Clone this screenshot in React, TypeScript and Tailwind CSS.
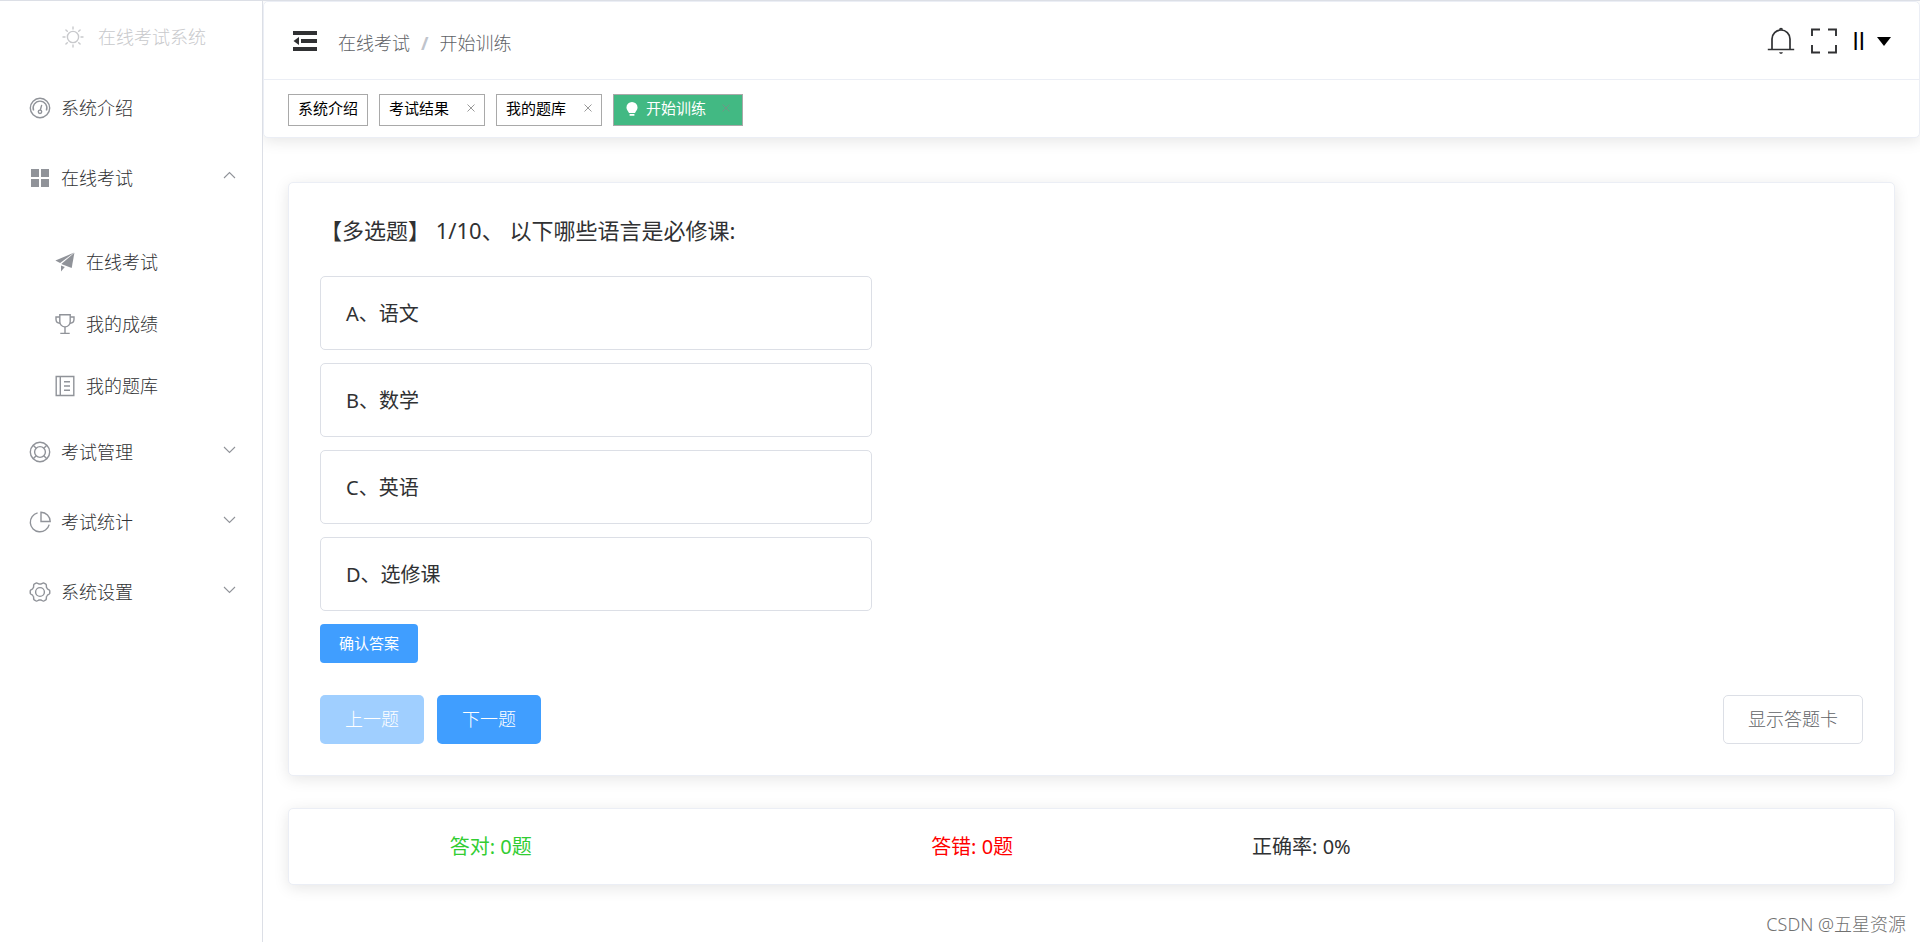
import { useState } from "react";
import type { ReactNode } from "react";

type IconProps = { children: ReactNode; className?: string; box?: number };

function Icon({ children, className = "size-[22px]", box = 22 }: IconProps) {
  return (
    <svg
      viewBox={`0 0 ${box} ${box}`}
      className={`${className} shrink-0`}
      fill="none"
      stroke="currentColor"
      strokeWidth="1.4"
      aria-hidden="true"
    >
      {children}
    </svg>
  );
}

const SunIcon = () => (
  <Icon>
    <circle cx="11" cy="11" r="5.6" />
    <path
      strokeLinecap="round"
      d="M11 1v2M11 19v2M1 11h2M19 11h2M3.9 3.9l1.4 1.4M16.7 16.7l1.4 1.4M3.9 18.1l1.4-1.4M16.7 5.3l1.4-1.4"
    />
  </Icon>
);

const OdometerIcon = () => (
  <Icon>
    <circle cx="11" cy="11" r="9.7" />
    <path d="M4.6 13.6A6.9 6.9 0 1 1 17.4 13.6" />
    <circle cx="11" cy="14.8" r="1.7" />
    <path strokeLinecap="round" d="M11.4 12.8l1.2-4.4" />
  </Icon>
);

const GridIcon = () => (
  <Icon>
    <g fill="currentColor" stroke="none">
      <rect x="2" y="2" width="8" height="8" />
      <rect x="12" y="2" width="8" height="8" />
      <rect x="2" y="12" width="8" height="8" />
      <rect x="12" y="12" width="8" height="8" />
    </g>
  </Icon>
);

const PlaneIcon = () => (
  <Icon>
    <g fill="currentColor" stroke="none">
      <path d="M20.2 1.6L1.4 9.6l4.7 2.5z" />
      <path d="M20.4 1.8L7.3 12.9l10.4 4.2z" />
      <path d="M7 14.4v6l3.8-4.4z" />
    </g>
  </Icon>
);

const TrophyIcon = () => (
  <Icon>
    <path d="M5.8 1.7h10.4v7a5.2 5.2 0 0 1-10.4 0z" />
    <path d="M5.8 4H2v2.2c0 2.3 1.5 3.9 4 4M16.2 4H20v2.2c0 2.3-1.5 3.9-4 4M11 14v6.2M6.3 20.4h9.4" />
  </Icon>
);

const NotebookIcon = () => (
  <Icon>
    <path d="M2.2 1.5h17.6v19H2.2zM6.3 1.5v19M10 6.8h6M10 11h6M10 15.2h6" />
  </Icon>
);

const HelpIcon = () => (
  <Icon>
    <circle cx="11" cy="11" r="9.7" />
    <circle cx="11" cy="11" r="5.4" />
    <path d="M4.2 4.2l3 3M17.8 4.2l-3 3M4.2 17.8l3-3M17.8 17.8l-3-3" />
  </Icon>
);

const PieIcon = () => (
  <Icon>
    <path d="M8.6 1.9A9.6 9.6 0 1 0 20.2 13.6M12 1.2v9.3h9.2A9.4 9.4 0 0 0 12 1.2z" />
  </Icon>
);

/* Outline of a six-toothed gear centred on 11,11. */
const gearPoints = Array.from({ length: 120 }, (_, i) => {
  const angle = (i * Math.PI) / 60;
  const radius = 9 + Math.max(-1, Math.min(0.8, 1.3 * Math.cos(6 * angle)));
  return `${(11 + radius * Math.cos(angle)).toFixed(2)},${(11 + radius * Math.sin(angle)).toFixed(2)}`;
}).join(" ");

const GearIcon = () => (
  <Icon>
    <polygon points={gearPoints} strokeLinejoin="round" />
    <circle cx="11" cy="11" r="4.4" />
  </Icon>
);

const Chevron = ({ up }: { up?: boolean }) => (
  <Icon className="mb-1.5 ml-auto size-[15px]" box={15}>
    <path strokeWidth="1.1" d={up ? "M2 10l5.5-5.5L13 10" : "M2 5l5.5 5.5L13 5"} />
  </Icon>
);

const FoldIcon = () => (
  <Icon className="size-[26px]" box={26}>
    <g fill="currentColor" stroke="none">
      <rect x="1" y="3" width="24" height="4" />
      <rect x="9" y="11" width="16" height="4" />
      <rect x="1" y="19" width="24" height="4" />
      <path d="M1.5 13L7 9v8z" />
    </g>
  </Icon>
);

const BellIcon = () => (
  <Icon className="size-7" box={28}>
    <path strokeWidth="1.7" d="M5 22.5V12a9 9 0 0 1 18 0v10.5M.8 22.5h26.4" />
    <path fill="currentColor" stroke="none" d="M12 2.8a2 2 0 0 1 4 0zM12 25.2h4l-1 1.5h-2z" />
  </Icon>
);

const FullScreenIcon = () => (
  <Icon className="size-7" box={28}>
    <path strokeWidth="1.9" d="M2 9V2.5h8M18 2.5h8V9M26 18v7.5h-8M10 25.5H2V18" />
  </Icon>
);

const BulbIcon = () => (
  <Icon className="h-4 w-3" box={16}>
    <g fill="currentColor" stroke="none">
      <path d="M8 0a7.4 7.4 0 0 1 7.4 7.3c0 3-2 4.6-3.4 7.2H4C2.600 11.9.6 10.300.6 7.300A7.400 7.400 0 0 1 8 0zM4.800 16h6.400v2.200H4.800z" />
    </g>
  </Icon>
);

type SubItem = { label: string; icon: ReactNode };
type MenuItem = { label: string; icon: ReactNode; group?: boolean; children?: SubItem[] };

const menu: MenuItem[] = [
  { label: "系统介绍", icon: <OdometerIcon /> },
  {
    label: "在线考试",
    icon: <GridIcon />,
    group: true,
    children: [
      { label: "在线考试", icon: <PlaneIcon /> },
      { label: "我的成绩", icon: <TrophyIcon /> },
      { label: "我的题库", icon: <NotebookIcon /> },
    ],
  },
  { label: "考试管理", icon: <HelpIcon />, group: true },
  { label: "考试统计", icon: <PieIcon />, group: true },
  { label: "系统设置", icon: <GearIcon />, group: true },
];

function Sidebar() {
  return (
    <aside className="w-[263px] shrink-0 border-r border-[#dcdfe6] text-lg leading-6">
      <div className="flex h-[72px] items-center gap-3.5 pl-[62px] text-[#c8c9cc]">
        <SunIcon />
        <span>在线考试系统</span>
      </div>
      <nav>
        <ul>
          {menu.map((item) => (
            <li key={item.label}>
              <a href="#" className="flex h-[70px] items-center px-[25px] text-[#303133]">
                <span className="mr-1.5 flex w-[30px] justify-center text-[#909399]">{item.icon}</span>
                {item.label}
                {item.group && (
                  <span className="ml-auto text-[#909399]">
                    <Chevron up={!!item.children} />
                  </span>
                )}
              </a>
              {item.children && (
                <ul className="pt-[18px]">
                  {item.children.map((sub) => (
                    <li key={sub.label}>
                      <a href="#" className="flex h-[62px] items-center pl-[50px] text-[#303133]">
                        <span className="mr-1.5 flex w-[30px] justify-center text-[#909399]">{sub.icon}</span>
                        {sub.label}
                      </a>
                    </li>
                  ))}
                </ul>
              )}
            </li>
          ))}
        </ul>
      </nav>
    </aside>
  );
}

const tabs = [
  { label: "系统介绍", closable: false, active: false },
  { label: "考试结果", closable: true, active: false },
  { label: "我的题库", closable: true, active: false },
  { label: "开始训练", closable: true, active: true },
];

function Header() {
  return (
    <header className="rounded-[5px] border border-[#ebeef5] bg-white shadow-[0_3px_15px_rgba(0,0,0,0.1)]">
      <div className="flex h-[78px] items-center border-b border-[#ebeef5] px-7 text-[#303133]">
        <button type="button" aria-label="折叠菜单">
          <FoldIcon />
        </button>
        <nav aria-label="面包屑" className="ml-5 flex items-center gap-[11px] pt-1 text-lg leading-6 text-[#606266]">
          <a href="#">在线考试</a>
          <span className="font-bold text-[#c0c4cc]">/</span>
          <span>开始训练</span>
        </nav>
        <div className="ml-auto flex items-center gap-[15px]">
          <button type="button" aria-label="通知">
            <BellIcon />
          </button>
          <button type="button" aria-label="全屏">
            <FullScreenIcon />
          </button>
          <button type="button" className="flex items-center gap-3 text-2xl leading-7 font-normal text-black">
            ll
            <svg viewBox="0 0 14 9" className="mt-0.5 h-[9px] w-3.5" fill="currentColor" aria-hidden="true">
              <path d="M0 0h14L7 9z" />
            </svg>
          </button>
        </div>
      </div>
      <div className="flex gap-[11px] px-6 pt-3.5 pb-[11px] text-[15px] leading-5">
        {tabs.map((tab) => (
          <div
            key={tab.label}
            className={
              tab.active
                ? "flex h-8 items-center border border-[#a9a9a9] bg-[#42b983] px-2 pb-1 font-normal text-white"
                : "flex h-8 items-center border border-[#a9a9a9] bg-white px-[9px] pb-1 font-normal text-black"
            }
          >
            {tab.active && (
              <span className="mr-2 ml-1 flex">
                <BulbIcon />
              </span>
            )}
            <a href="#">{tab.label}</a>
            {tab.closable && (
              <button
                type="button"
                aria-label={`关闭${tab.label}`}
                className={tab.active ? "mr-1 ml-4 text-[#6f9685]" : "ml-[18px] text-[#999999]"}
              >
                <Icon className="size-2" box={8}>
                  <path strokeWidth="1" d="M.5.5l7 7M7.5.5l-7 7" />
                </Icon>
              </button>
            )}
          </div>
        ))}
      </div>
    </header>
  );
}

const options = ["A、语文", "B、数学", "C、英语", "D、选修课"];

function QuestionCard() {
  const [picked, setPicked] = useState<string[]>([]);
  const toggle = (o: string) =>
    setPicked((p) => (p.includes(o) ? p.filter((x) => x !== o) : [...p, o]));

  return (
    <section className="rounded-[5px] border border-[#ebeef5] bg-white px-[31px] pt-[30px] pb-[31px] shadow-[0_3px_15px_rgba(0,0,0,0.1)]">
      <h1 className="mb-[29px] text-[22px] leading-[34px] font-normal">
        【多选题】 1/10、 以下哪些语言是必修课:
      </h1>
      <div className="flex flex-col items-start gap-[13px] font-normal">
        {options.map((o) => (
          <label
            key={o}
            className="flex h-[74px] w-[552px] max-w-full cursor-pointer items-center rounded-[5px] border border-[#dcdfe6] px-[25px] pt-0.5 text-xl has-checked:border-[#409eff]"
          >
            <input
              type="checkbox"
              className="sr-only"
              checked={picked.includes(o)}
              onChange={() => toggle(o)}
            />
            {o}
          </label>
        ))}
        <button type="button" className="h-[39px] rounded bg-[#409eff] px-[19px] text-[15px] text-white">
          确认答案
        </button>
      </div>
      <div className="mt-8 flex gap-[13px] text-lg">
        <button type="button" disabled className="h-[49px] rounded-[5px] bg-[#a0cfff] px-[25px] pb-0.5 text-white">
          上一题
        </button>
        <button type="button" className="h-[49px] rounded-[5px] bg-[#409eff] px-[25px] pb-0.5 text-white">
          下一题
        </button>
        <button
          type="button"
          className="ml-auto h-[49px] rounded-[5px] border border-[#dcdfe6] bg-white px-6 pb-0.5 text-[#606266]"
        >
          显示答题卡
        </button>
      </div>
    </section>
  );
}

function ScoreCard() {
  return (
    <section className="flex h-[77px] items-center rounded-[5px] border border-[#ebeef5] bg-white pl-[10%] text-xl font-normal shadow-[0_3px_15px_rgba(0,0,0,0.1)]">
      <p className="w-1/3 text-[#32cd32]">答对: 0题</p>
      <p className="w-2/9 text-[#ff0000]">答错: 0题</p>
      <p>正确率: 0%</p>
    </section>
  );
}

export default function App() {
  return (
    <div className="relative flex min-h-screen border-t border-[#dcdfe6] bg-white font-['Noto_Sans','Noto_Sans_CJK_SC',sans-serif] font-light text-[#303133]">
      <Sidebar />
      <div className="min-w-0 flex-1 overflow-hidden">
        <Header />
        <main className="flex flex-col gap-8 px-[25px] pt-11 pb-12">
          <QuestionCard />
          <ScoreCard />
        </main>
      </div>
      <p className="absolute right-3.5 bottom-1.5 text-lg leading-6 text-[#707070]">CSDN @五星资源</p>
    </div>
  );
}
